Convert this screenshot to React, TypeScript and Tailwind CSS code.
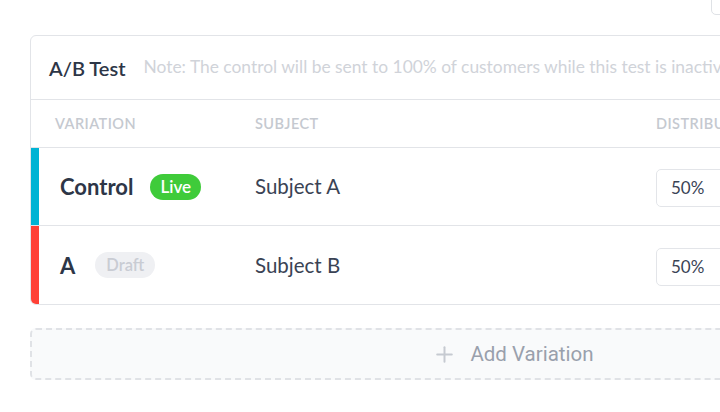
import { Plus } from 'lucide-react';

type Variation = {
  name: string;
  status: 'Live' | 'Draft';
  subject: string;
  share: string;
  bar: string;
};

const variations: Variation[] = [
  { name: 'Control', status: 'Live', subject: 'Subject A', share: '50%', bar: 'bg-[#00b3d4]' },
  { name: 'A', status: 'Draft', subject: 'Subject B', share: '50%', bar: 'bg-[#ff4136]' },
];

function StatusBadge({ status }: { status: Variation['status'] }) {
  if (status === 'Live') {
    return (
      <span className="flex h-[26px] items-center rounded-full bg-[#3fcb3a] px-[10px] text-[17px] font-semibold text-white">
        Live
      </span>
    );
  }
  return (
    <span className="ml-[3px] flex h-[26px] items-center rounded-full bg-[#eff0f3] px-[11px] text-[16.5px] font-semibold text-[#c9ccd3]">
      Draft
    </span>
  );
}

export default function App() {
  return (
    <div className="h-[412px] w-[720px] overflow-hidden bg-white pl-[30px] font-[Lato,sans-serif]">
      {/* top toolbar, mostly off screen */}
      <div className="flex h-[35px]">
        <div className="-mt-[22px] ml-[681px] h-[37px] w-[90px] shrink-0 rounded-[5px] border border-[#dfe2e6]" />
      </div>

      {/* A/B test card */}
      <div className="w-[966px] overflow-hidden rounded-[6px] border border-[#e2e4e8]">
        <div className="flex h-[64px] items-center gap-[18px] border-b border-[#e2e4e8] px-[18px]">
          <span className="text-[20px] font-semibold text-[#2d3647]">A/B Test</span>
          <span className="whitespace-nowrap text-[17.4px] text-[#d0d3d9]">
            Note: The control will be sent to 100% of customers while this test is inactive.
          </span>
        </div>

        <div className="flex h-[48px] items-center border-b border-[#e2e4e8] text-[14.5px] font-semibold tracking-[0.03em] text-[#c5c9d0]">
          <div className="w-[224px] pl-[24px]">VARIATION</div>
          <div className="w-[401px]">SUBJECT</div>
          <div className="flex-1">DISTRIBUTION</div>
        </div>

        {variations.map((v, i) => (
          <div
            key={v.name}
            className={`flex h-[78px] items-stretch ${i < variations.length - 1 ? 'border-b border-[#e2e4e8]' : ''}`}
          >
            <div className={`w-[8px] shrink-0 ${v.bar}`} />
            <div className="flex w-[216px] items-center gap-[17px] pl-[21px]">
              <span className="text-[22px] font-bold text-[#2d3647]">{v.name}</span>
              <StatusBadge status={v.status} />
            </div>
            <div className="flex w-[401px] items-center text-[20.5px] text-[#3a4354]">{v.subject}</div>
            <div className="flex flex-1 items-center pt-[3px]">
              <div className="flex h-[38px] w-[100px] items-center rounded-[5px] border border-[#e3e5e9] px-[14px] text-[17px] text-[#3a4354]">
                {v.share}
              </div>
            </div>
          </div>
        ))}
      </div>

      {/* add variation */}
      <button className="mt-[23px] flex h-[52px] w-[966px] items-center justify-center gap-[13px] rounded-[6px] border-2 border-dashed border-[#e0e2e6] bg-[#f9fafb]">
        <Plus size={25} strokeWidth={1.9} className="text-[#c6cad1]" />
        <span className="font-[Roboto,sans-serif] text-[20.5px] text-[#99a0ac]">Add Variation</span>
      </button>
    </div>
  );
}
